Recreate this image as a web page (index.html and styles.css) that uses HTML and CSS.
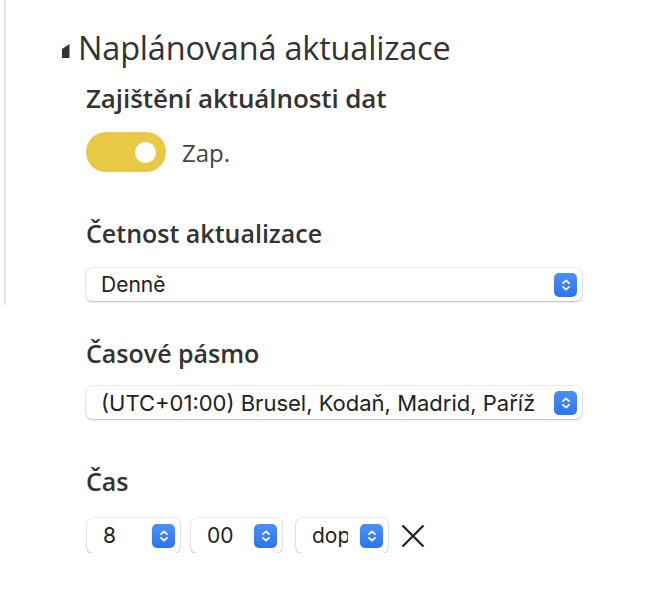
FILE: index.html
```html
<!DOCTYPE html>
<html lang="cs">
<head>
<meta charset="utf-8">
<link rel="stylesheet" href="styles.css">
</head>
<body>
<div class="page">
  <div class="rail"></div>
  <main class="content">
    <div class="section-title">
      <svg class="caret" width="8" height="14" viewBox="0 0 8 14"><polygon points="0,5 7.5,0 7.5,14 0,14" fill="#333"/></svg>
      <h1>Naplánovaná aktualizace</h1>
    </div>
    <div class="body">
      <h2 class="label-sub">Zajištění aktuálnosti dat</h2>
      <div class="toggle-row">
        <div class="toggle"><div class="knob"></div></div>
        <span class="toggle-text">Zap.</span>
      </div>

      <h3 class="label freq">Četnost aktualizace</h3>
      <div class="select wide first">
        <span class="select-text">Denně</span>
        <span class="stepper"><svg width="10" height="14" viewBox="0 0 10 14"><path d="M2 5.2 L5 2.4 L8 5.2 M2 8.8 L5 11.6 L8 8.8" fill="none" stroke="#fff" stroke-width="1.8" stroke-linecap="round" stroke-linejoin="round"/></svg></span>
      </div>

      <h3 class="label zone">Časové pásmo</h3>
      <div class="select wide second">
        <span class="select-text">(UTC+01:00) Brusel, Kodaň, Madrid, Paříž</span>
        <span class="stepper"><svg width="10" height="14" viewBox="0 0 10 14"><path d="M2 5.2 L5 2.4 L8 5.2 M2 8.8 L5 11.6 L8 8.8" fill="none" stroke="#fff" stroke-width="1.8" stroke-linecap="round" stroke-linejoin="round"/></svg></span>
      </div>

      <h3 class="label time">Čas</h3>
      <div class="time-row">
        <div class="select small hour">
          <span class="select-text">8</span>
          <span class="stepper"><svg width="10" height="14" viewBox="0 0 10 14"><path d="M2 5.2 L5 2.4 L8 5.2 M2 8.8 L5 11.6 L8 8.8" fill="none" stroke="#fff" stroke-width="1.8" stroke-linecap="round" stroke-linejoin="round"/></svg></span>
        </div>
        <div class="select small minute">
          <span class="select-text">00</span>
          <span class="stepper"><svg width="10" height="14" viewBox="0 0 10 14"><path d="M2 5.2 L5 2.4 L8 5.2 M2 8.8 L5 11.6 L8 8.8" fill="none" stroke="#fff" stroke-width="1.8" stroke-linecap="round" stroke-linejoin="round"/></svg></span>
        </div>
        <div class="select small ampm">
          <span class="select-text">dop.</span>
          <span class="stepper"><svg width="10" height="14" viewBox="0 0 10 14"><path d="M2 5.2 L5 2.4 L8 5.2 M2 8.8 L5 11.6 L8 8.8" fill="none" stroke="#fff" stroke-width="1.8" stroke-linecap="round" stroke-linejoin="round"/></svg></span>
        </div>
        <svg class="clear" width="24" height="24" viewBox="0 0 24 24"><path d="M1.5 1.5 L22.5 22.5 M22.5 1.5 L1.5 22.5" stroke="#222" stroke-width="2.3" fill="none"/></svg>
      </div>
    </div>
  </main>
</div>
</body>
</html>
```

FILE: styles.css
```css
* { box-sizing: border-box; }
html, body { margin: 0; padding: 0; background: #fff; }
body { font-family: "Open Sans", "Noto Sans", sans-serif; color: #333; }

.page { display: flex; align-items: flex-start; }
.rail { width: 2px; height: 305px; margin-left: 4px; background: #e2e2e2; flex: none; }

.content { padding: 28px 0 0 56px; flex: 1; }

.section-title { display: flex; align-items: center; gap: 8px; }
.caret { margin-top: 6px; }
.section-title h1 { margin: 0; font-weight: 400; font-size: 32.5px; line-height: 40px; color: #333; letter-spacing: -0.2px; }

.body { padding-left: 24px; }

.label-sub { margin: 14px 0 0; font-size: 26px; line-height: 32px; font-weight: 600; color: #333; letter-spacing: -0.1px; }

.toggle-row { display: flex; align-items: center; gap: 16px; margin-top: 18px; }
.toggle { width: 80px; height: 40px; border-radius: 20px; background: #e9c846; display: flex; align-items: center; justify-content: flex-end; padding-right: 10px; }
.knob { width: 21px; height: 21px; border-radius: 50%; background: #fff; }
.toggle-text { font-size: 24px; color: #444; }

.label { margin: 0; font-size: 25px; line-height: 32px; font-weight: 600; color: #333; }
.label.freq { margin-top: 45px; }
.label.zone { margin-top: 36px; }
.label.time { margin-top: 46px; }

.select { display: flex; align-items: center; height: 33px; border-radius: 6px; background: #fff; box-shadow: 0 0 0 0.5px rgba(0,0,0,0.12), 0 1px 2px rgba(0,0,0,0.22); padding: 0 5px 0 15px; font-family: Inter, "Liberation Sans", sans-serif; font-size: 21px; color: #222; overflow: hidden; }
.select.wide { width: 496px; }
.select.first { margin-top: 19px; }
.select.second { margin-top: 17px; font-size: 22px; }
.select-text { white-space: nowrap; overflow: hidden; flex: 1; }
.stepper { width: 23px; height: 24px; border-radius: 5px; background: linear-gradient(#4d8ff7, #2f72f0); display: flex; align-items: center; justify-content: center; flex: none; margin-left: 14px; }

.time-row { display: flex; align-items: center; margin-top: 21px; margin-left: 1px; }
.select.small { height: 35px; padding-left: 16px; }
.select.small .select-text { flex: none; width: 36px; }
.select.small .stepper { margin-left: auto; }
.select.hour { width: 93px; }
.select.minute { width: 91px; margin-left: 11px; }
.select.ampm { width: 92px; margin-left: 14px; }
.clear { margin-left: 13px; }
```
